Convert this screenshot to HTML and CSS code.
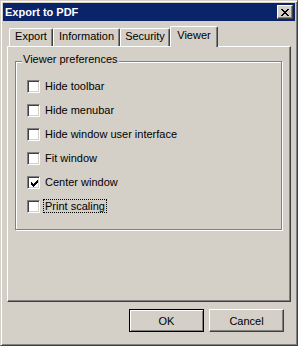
FILE: index.html
```html
<!DOCTYPE html>
<html lang="en">
<head>
    <meta charset="UTF-8">
    <title>Export to PDF</title>
    <link rel="stylesheet" href="styles.css">
</head>
<body>
    <div class="window">
        <div class="titlebar">
            <span class="title">Export to PDF</span>
            <button class="close">
                <svg width="8" height="7" viewBox="0 0 8 7" shape-rendering="crispEdges">
                    <path d="M0 0h2v1h-2zM6 0h2v1h-2zM1 1h2v1h-2zM5 1h2v1h-2zM2 2h4v1h-4zM3 3h2v1h-2zM2 4h4v1h-4zM1 5h2v1h-2zM5 5h2v1h-2zM0 6h2v1h-2zM6 6h2v1h-2z" fill="#000"/>
                </svg>
            </button>
        </div>

        <div class="tabs">
            <div class="tab tab-export">Export</div>
            <div class="tab tab-info">Information</div>
            <div class="tab tab-security">Security</div>
            <div class="tab tab-viewer active">Viewer</div>
        </div>

        <div class="page">
            <div class="group">
                <span class="group-label">Viewer preferences</span>
                <div class="check"><span class="box"></span><span class="text">Hide toolbar</span></div>
                <div class="check"><span class="box"></span><span class="text">Hide menubar</span></div>
                <div class="check"><span class="box"></span><span class="text">Hide window user interface</span></div>
                <div class="check"><span class="box"></span><span class="text">Fit window</span></div>
                <div class="check">
                    <span class="box">
                        <svg width="7" height="7" viewBox="0 0 7 7" shape-rendering="crispEdges">
                            <path d="M6 0h1v1h-1zM5 1h2v1h-2zM0 2h1v1h-1zM4 2h3v1h-3zM0 3h2v1h-2zM3 3h3v1h-3zM0 4h5v1h-5zM1 5h3v1h-3zM2 6h1v1h-1z" fill="#000"/>
                        </svg>
                    </span>
                    <span class="text">Center window</span>
                </div>
                <div class="check"><span class="box"></span><span class="text focus">Print scaling</span></div>
            </div>
        </div>

        <div class="buttons">
            <button class="btn default">OK</button>
            <button class="btn">Cancel</button>
        </div>
    </div>
</body>
</html>
```

FILE: styles.css
```css
body, html {
    margin: 0;
    padding: 0;
    background-color: #d4d0c8;
    font-family: "Liberation Sans", Arial, sans-serif;
    font-size: 11px;
    color: #000;
}
.window {
    box-sizing: border-box;
    width: 298px;
    height: 346px;
    padding: 2px;
    background-color: #d4d0c8;
    border: 1px solid;
    border-color: #d4d0c8 #404040 #404040 #d4d0c8;
    box-shadow: inset 1px 1px 0 #fff, inset -1px -1px 0 #808080;
}
.titlebar {
    display: flex;
    align-items: center;
    height: 18px;
    padding: 0 2px;
    background-color: #0a246a;
}
.title {
    color: #fff;
    font-weight: bold;
    line-height: 18px;
}
.close {
    box-sizing: border-box;
    width: 16px;
    height: 14px;
    margin-left: auto;
    padding: 0;
    display: flex;
    align-items: center;
    justify-content: center;
    background-color: #d4d0c8;
    border: 1px solid;
    border-color: #fff #404040 #404040 #fff;
    box-shadow: inset -1px -1px 0 #808080;
}
.close svg {
    display: block;
    margin-top: 1px;
}
.tabs {
    display: flex;
    align-items: flex-end;
    margin: 5px 0 0 6px;
}
.tab {
    box-sizing: border-box;
    height: 18px;
    padding-top: 1px;
    line-height: 13px;
    text-align: center;
    border-top: 1px solid #fff;
    border-left: 1px solid #fff;
    border-right: 1px solid #404040;
    border-radius: 2px 2px 0 0;
    box-shadow: inset -1px 0 0 #808080;
}
.tab-export { width: 44px; }
.tab-info { width: 67px; }
.tab-security { width: 50px; }
.tab-viewer { width: 48px; }
.tab.active {
    position: relative;
    z-index: 1;
    height: 21px;
    padding-top: 2px;
    margin-bottom: -1px;
    background-color: #d4d0c8;
}
.page {
    box-sizing: border-box;
    width: 284px;
    height: 256px;
    margin-left: 4px;
    padding: 14px 0 0 7px;
    border: 1px solid;
    border-color: #fff #404040 #404040 #fff;
    box-shadow: inset -1px -1px 0 #808080;
}
.group {
    position: relative;
    box-sizing: border-box;
    width: 267px;
    height: 169px;
    padding: 18px 0 0 11px;
    display: flex;
    flex-direction: column;
    gap: 11px;
    border: 1px solid #808080;
    box-shadow: inset 1px 1px 0 #fff, 1px 1px 0 #fff;
}
.group-label {
    position: absolute;
    left: 6px;
    top: -9px;
    padding: 0 1px;
    line-height: 13px;
    background-color: #d4d0c8;
}
.check {
    display: flex;
    align-items: center;
    gap: 4px;
    height: 13px;
}
.box {
    box-sizing: border-box;
    width: 13px;
    height: 13px;
    flex-shrink: 0;
    display: flex;
    align-items: center;
    justify-content: center;
    background-color: #fff;
    border: 1px solid;
    border-color: #808080 #fff #fff #808080;
    box-shadow: inset 1px 1px 0 #404040, inset -1px -1px 0 #d4d0c8;
}
.box svg {
    display: block;
    margin: 1px 0 0 1px;
}
.text {
    padding: 0 1px;
    line-height: 13px;
    white-space: nowrap;
}
.text.focus {
    align-self: flex-start;
    line-height: 12px;
    outline: 1px dotted #000;
}
.buttons {
    display: flex;
    justify-content: flex-end;
    gap: 5px;
    margin-top: 7px;
    padding-right: 11px;
}
.btn {
    box-sizing: border-box;
    width: 75px;
    height: 23px;
    padding: 0;
    font-family: inherit;
    font-size: 11px;
    color: #000;
    background-color: #d4d0c8;
    border: 1px solid;
    border-color: #fff #404040 #404040 #fff;
    box-shadow: inset -1px -1px 0 #808080;
}
.btn.default {
    border-color: #000;
    box-shadow: inset 1px 1px 0 #fff, inset -1px -1px 0 #808080;
}
```
